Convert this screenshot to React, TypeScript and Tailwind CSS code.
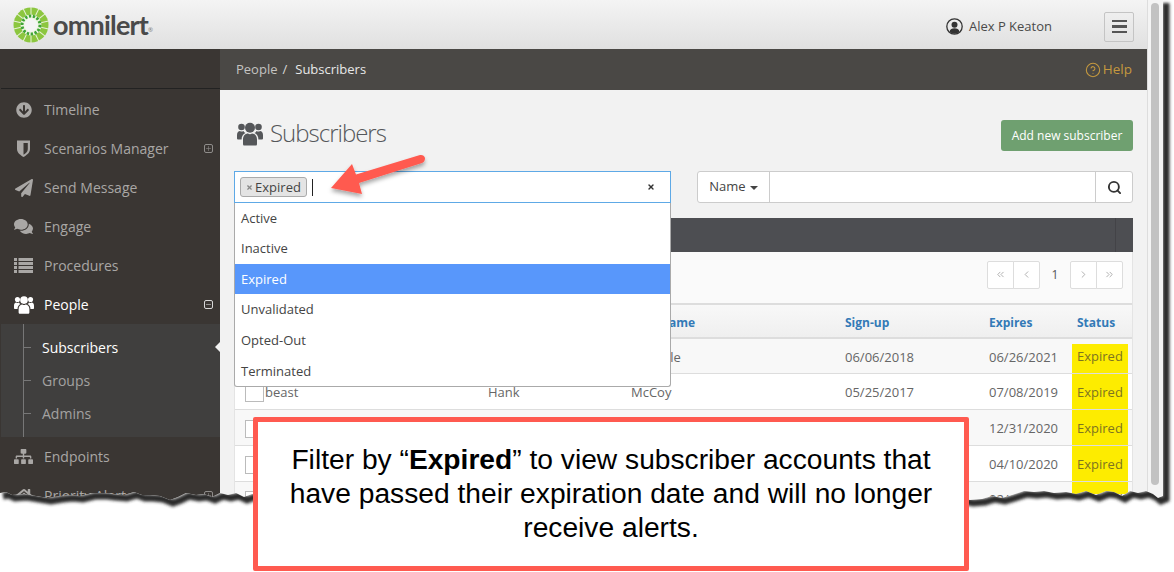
import React from "react";
import { ChevronLeft, ChevronRight, ChevronsLeft, ChevronsRight, Search, X, Plus, Minus, CircleHelp } from "lucide-react";
import { FaArrowCircleDown, FaPaperPlane, FaComments, FaSitemap, FaHome } from "react-icons/fa";

const font = "font-['Open_Sans',sans-serif]";

function Logo() {
  const segs = Array.from({ length: 14 }, (_, i) => (i * 360) / 14);
  return (
    <svg width="36" height="36" viewBox="0 0 36 36" className="shrink-0">
      <circle cx="18" cy="18" r="17.5" fill="#8cc63f" />
      {segs.map((a) => (
        <line key={a} x1="18" y1="18" x2="18" y2="0" stroke="#e8f2d8" strokeWidth="1" transform={`rotate(${a} 18 18)`} />
      ))}
      <circle cx="18" cy="18" r="10.5" fill="#eef5e2" />
      <circle cx="18" cy="18" r="9" fill="none" stroke="#3fa535" strokeWidth="3" strokeDasharray="2.4 1.6" />
      <circle cx="18" cy="18" r="6.5" fill="#f4f4f4" />
    </svg>
  );
}

function UsersIcon({ width, height }: { width: number; height: number }) {
  return (
    <svg width={width} height={height} viewBox="0 0 26 24" fill="currentColor">
      <circle cx="13" cy="6.200" r="5" />
      <circle cx="4.500" cy="5.500" r="3.300" />
      <circle cx="21.500" cy="5.500" r="3.300" />
      <path d="M7 24 Q6 24 6 22.500 V18 C6 14 8.500 12 11 12 Q13 13.500 15 12 C17.500 12 20 14 20 18 V22.500 Q20 24 19 24 Z" />
      <path d="M0 17 V13.500 C0 11 1.500 9.500 3 9.500 Q4.500 10.500 6.500 9.500 Q7 10.800 8.500 11.500 C6 12.500 4.600 15 4.600 18 H1 Q0 18 0 17 Z" />
      <path d="M26 17 V13.500 C26 11 24.500 9.500 23 9.500 Q21.500 10.500 19.500 9.500 Q19 10.800 17.500 11.500 C20 12.500 21.400 15 21.400 18 H25 Q26 18 26 17 Z" />
    </svg>
  );
}

function ShieldIcon() {
  return (
    <svg width="15" height="17" viewBox="0 0 15 17" fill="currentColor">
      <path d="M1 0.500 H14 V9 C14 13 10 15.500 7.500 17 C5 15.500 1 13 1 9 Z" />
      <path d="M7.500 3 H11.800 V9 C11.800 11.800 9.500 13.500 7.500 14.700 Z" fill="#3a3633" />
    </svg>
  );
}

function ListIcon() {
  return (
    <svg width="19" height="15" viewBox="0 0 19 15" fill="currentColor">
      {[0, 4, 8, 12].map((y) => (
        <g key={y}>
          <rect x="0" y={y} width="3" height="3" />
          <rect x="4.500" y={y} width="14.500" height="3" />
        </g>
      ))}
    </svg>
  );
}

function UserCircle() {
  return (
    <svg width="17" height="17" viewBox="0 0 17 17" className="text-[#333]">
      <circle cx="8.500" cy="8.500" r="7.700" fill="none" stroke="currentColor" strokeWidth="1.300" />
      <circle cx="8.500" cy="6.800" r="3" fill="currentColor" />
      <path d="M3.600 13.500 C4 11 6 10.200 8.500 10.200 C11 10.200 13 11 13.400 13.500 C12 15 10.500 15.700 8.500 15.700 C6.500 15.700 5 15 3.600 13.500 Z" fill="currentColor" />
    </svg>
  );
}

function NavItem({ icon, label, active, mark }: { icon: React.ReactNode; label: string; active?: boolean; mark?: "plus" | "minus" }) {
  return (
    <div className={`relative flex h-[39px] items-center pl-[12px] pr-[7px] text-[14px] ${active ? "text-white" : "text-[#a9a7a5]"}`}>
      <span className="flex w-[21px] justify-center">{icon}</span>
      <span className="ml-[10px] flex-1">{label}</span>
      {mark && (
        <span className={`flex h-[9px] w-[9px] items-center justify-center rounded-[2px] border ${active ? "border-[#d8d8d8] text-[#d8d8d8]" : "border-[#8f8d8b] text-[#8f8d8b]"}`}>
          {mark === "plus" ? <Plus size={7} strokeWidth={2} /> : <Minus size={7} strokeWidth={2} />}
        </span>
      )}
    </div>
  );
}

function SubItem({ label, active }: { label: string; active?: boolean }) {
  return (
    <div className={`relative flex h-[33px] items-center pl-[41px] text-[14px] ${active ? "font-medium text-white" : "text-[#a3a2a1]"}`}>
      <span className="absolute left-[22px] top-[16px] h-px w-[8px] bg-[#777]" />
      {label}
      {active && <span className="absolute right-0 top-[11px] h-0 w-0 border-y-[5px] border-r-[5px] border-y-transparent border-r-[#f2f2f2]" />}
    </div>
  );
}

const rows = [
  { user: "", first: "", last: "Whipple", signup: "06/06/2018", expires: "06/26/2021", h: "h-[35px] pt-[2px]", bg: "bg-[#f8f8f8]", cell: "self-end h-[29px] bg-[#fdec00] pb-[3px]" },
  { user: "beast", first: "Hank", last: "McCoy", signup: "05/25/2017", expires: "07/08/2019", h: "h-[36px]", bg: "bg-white", cell: "h-full bg-[#fdec00] pt-[2px]" },
  { user: "", first: "", last: "", signup: "", expires: "12/31/2020", h: "h-[36px]", bg: "bg-[#f8f8f8]", cell: "h-full bg-[#fdec00] pt-[2px]" },
  { user: "", first: "", last: "", signup: "", expires: "04/10/2020", h: "h-[36px]", bg: "bg-white", cell: "h-full bg-[#fdec00] pt-[2px]" },
  { user: "", first: "", last: "", signup: "", expires: "02/15/2020", h: "h-[35px]", bg: "bg-[#f8f8f8]", cell: "h-full bg-[linear-gradient(#fdec00_12px,transparent_12px)] pt-[2px]" },
];

function PageButton({ children, className }: { children: React.ReactNode; className: string }) {
  return <span className={`flex h-[28px] w-[27px] items-center justify-center border border-[#ddd] bg-white text-[#aaa] ${className}`}>{children}</span>;
}

function Table() {
  return (
    <div className="text-[13px] text-[#666]">
      <div className="flex h-[36px] items-center border-y-2 border-[#ddd] bg-gradient-to-b from-[#f8f8f8] to-[#efefef] pt-[3px] text-[12px] font-bold text-[#337ab7]">
        <span className="ml-[30px] w-[223px]">Username</span>
        <span className="w-[143px]">First Name</span>
        <span className="w-[214px]">Last Name</span>
        <span className="w-[144px]">Sign-up</span>
        <span className="w-[88px]">Expires</span>
        <span>Status</span>
      </div>
      {rows.map((r, i) => (
        <div key={i} className={`flex items-center border-b border-[#ddd] ${r.h} ${r.bg}`}>
          <span className="ml-[10px] mt-[2px] h-[18px] w-[19px] shrink-0 border border-[#bbb] bg-white" />
          <span className="ml-px w-[223px] pt-[2px]">{r.user}</span>
          <span className="w-[143px] pt-[2px]">{r.first}</span>
          <span className="w-[214px] pt-[2px]">{r.last}</span>
          <span className="w-[144px] pt-[2px]">{r.signup}</span>
          <span className="w-[83px] pt-[2px]">{r.expires}</span>
          <span className={`flex w-[56px] items-center pl-[5px] text-[#7d7420] ${r.cell}`}>Expired</span>
        </div>
      ))}
    </div>
  );
}

const tear =
  "M1163 0 L1163 496 L1158 498 L1153 494 L1146 491 L1138 493 L1130 491 L1122 496 L1114 492 L1106 491 L1096 495 L1086 491 L1076 494 L1066 492 L1054 493 L1044 491 L1034 492 L1024 491 L1012 495 L1002 498 L992 496 L982 499 L970 500 L960 498 L950 498 L935 496 L920 498 L905 496 L890 499 L870 496 L850 498 L830 496 L810 498 L790 496 L770 498 L750 496 L730 498 L710 496 L690 498 L670 496 L650 498 L630 496 L610 498 L590 496 L570 498 L550 496 L530 498 L510 496 L490 498 L470 496 L450 498 L430 496 L410 498 L390 496 L370 498 L350 496 L330 498 L310 496 L290 498 L270 496 L252 494 L244 497 L236 493 L228 495 L220 493 L212 497 L204 494 L196 495 L186 493 L178 497 L170 500 L160 496 L150 495 L142 495 L134 492 L124 495 L112 494 L104 493 L92 493 L80 496 L70 495 L60 496 L48 498 L36 496 L24 494 L12 495 L6 492 L0 493";

export default function App() {
  return (
    <div className={`relative h-[572px] w-[1174px] overflow-hidden bg-white ${font}`}>
      <div className="flex h-[572px] w-[1163px]">
        <div className="flex w-[1147px] flex-col">
          <header className="flex h-[49px] shrink-0 items-center bg-gradient-to-b from-[#f4f4f4] to-[#e0e0e0] pr-[13px]">
            <div className="ml-[13px] flex items-center">
              <Logo />
              <span className="ml-[4px] font-['Lato',sans-serif] text-[27px] font-bold leading-none tracking-[-0.8px] text-[#4a4a4a]">omnilert</span>
              <span className="mt-[12px] text-[6px] text-[#777]">®</span>
            </div>
            <div className="ml-auto flex items-center pt-[4px]">
              <UserCircle />
              <span className="ml-[6px] pt-px text-[13px] text-[#4a4a4a]">Alex P Keaton</span>
              <span className="ml-[52px] flex h-[30px] w-[30px] flex-col items-center justify-center gap-[3px] rounded-[2px] border border-[#c4c4c4]">
                <span className="h-[2.500px] w-[15px] bg-[#555]" />
                <span className="h-[2.500px] w-[15px] bg-[#555]" />
                <span className="h-[2.500px] w-[15px] bg-[#555]" />
              </span>
            </div>
          </header>
          <div className="flex min-h-0 flex-1">
            <aside className="w-[220px] shrink-0 bg-[#3a3633] pl-px">
              <div className="h-[40px] border-b border-[#222]" />
              <div className="pt-px">
                <NavItem icon={<FaArrowCircleDown size={16} />} label="Timeline" />
                <NavItem icon={<ShieldIcon />} label="Scenarios Manager" mark="plus" />
                <NavItem icon={<FaPaperPlane size={18} />} label="Send Message" />
                <NavItem icon={<FaComments size={19} />} label="Engage" />
                <NavItem icon={<ListIcon />} label="Procedures" />
                <NavItem icon={<UsersIcon width={20} height={19} />} label="People" active mark="minus" />
              </div>
              <div className="relative h-[113px] bg-[#403f3e]">
                <span className="absolute bottom-0 left-[22px] top-0 w-px bg-[#777]" />
                <div className="pt-[7px]">
                  <SubItem label="Subscribers" active />
                  <SubItem label="Groups" />
                  <SubItem label="Admins" />
                </div>
              </div>
              <NavItem icon={<FaSitemap size={19} />} label="Endpoints" />
              <NavItem icon={<FaHome size={18} />} label="Priority Alert" mark="plus" />
            </aside>
            <main className="min-w-0 flex-1 bg-[#f2f2f2]">
              <div className="flex h-[41px] items-center justify-between bg-[#4a4845] pl-[16px] pr-[15px] text-[13px]">
                <div>
                  <span className="text-[#c4c3c1]">People</span>
                  <span className="ml-[5px] text-[#d8d7d5]">/</span>
                  <span className="ml-[8px] text-[#e8e8e8]">Subscribers</span>
                </div>
                <div className="flex items-center text-[#c4983f]">
                  <CircleHelp size={16} strokeWidth={1.6} />
                  <span className="ml-[2px] text-[13.500px]">Help</span>
                </div>
              </div>
              <div className="px-[14px]">
                <div className="flex h-[81px] items-start justify-between pt-[30px]">
                  <div className="flex items-center pl-[3px] text-[#55575a]">
                    <UsersIcon width={26} height={25} />
                    <span className="ml-[7px] text-[24px] font-light leading-[26px] tracking-[-1px]">Subscribers</span>
                  </div>
                  <span className="flex h-[31px] w-[132px] items-center justify-center rounded-[3px] bg-[#6fa070] text-[12px] text-white">Add new subscriber</span>
                </div>
                <div className="flex justify-between">
                  <div className="relative flex h-[32px] w-[437px] items-center border border-[#5ea9e6] bg-white pl-[5px]">
                    <span className="flex h-[20px] w-[67px] items-center justify-center rounded-[3px] border border-[#aaa] bg-[#e4e4e4] pt-px text-[13px] text-[#444]">
                      <X size={7} strokeWidth={4} className="mr-[2px] text-[#888]" />Expired
                    </span>
                    <span className="ml-[5px] h-[17px] w-px bg-[#222]" />
                    <X size={8} strokeWidth={4} className="absolute right-[15px] top-[11px] text-[#333]" />
                    <div className="absolute left-[-1px] top-[31px] z-10 w-[437px] rounded-b-[3px] border border-t-0 border-[#aaa] bg-white text-[13px] text-[#444]">
                      <div className="flex h-[30px] items-center pl-[6px] pt-[2px]">Active</div>
                      <div className="flex h-[31px] items-center pl-[6px]">Inactive</div>
                      <div className="flex h-[30px] items-center bg-[#5897fb] pl-[6px] pt-[2px] text-white">Expired</div>
                      <div className="flex h-[31px] items-center pl-[6px]">Unvalidated</div>
                      <div className="flex h-[31px] items-center pl-[6px]">Opted-Out</div>
                      <div className="flex h-[30px] items-center pl-[6px] pt-[2px]">Terminated</div>
                    </div>
                  </div>
                  <div className="flex h-[32px] w-[436px] overflow-hidden rounded-[3px] border border-[#ccc] bg-white">
                    <span className="flex w-[72px] items-center justify-center border-r border-[#ccc] text-[13px] text-[#444]">
                      Name<span className="ml-[4px] mt-px h-0 w-0 border-x-[4px] border-t-[4px] border-x-transparent border-t-[#444]" />
                    </span>
                    <span className="flex-1" />
                    <span className="flex w-[37px] items-center justify-center border-l border-[#ccc] text-[#333]">
                      <Search size={15} strokeWidth={3} />
                    </span>
                  </div>
                </div>
                <div className="mt-[15px] flex h-[34px] justify-end bg-[#4d4e52] pr-[17px]">
                  <span className="w-px bg-[#434347]" />
                </div>
                <div className="border-x border-[#e4e4e4] bg-[#fafafa]">
                  <div className="flex h-[51px] items-center justify-end pb-[6px] pr-[9px]">
                    <PageButton className="rounded-l-[2px]"><ChevronsLeft size={11} /></PageButton>
                    <PageButton className="-ml-px rounded-r-[2px]"><ChevronLeft size={11} /></PageButton>
                    <span className="w-[30px] text-center text-[12px] text-[#555]">1</span>
                    <PageButton className="rounded-l-[2px]"><ChevronRight size={11} /></PageButton>
                    <PageButton className="-ml-px rounded-r-[2px]"><ChevronsRight size={11} /></PageButton>
                  </div>
                  <Table />
                </div>
              </div>
            </main>
          </div>
        </div>
        {/* scrollbar */}
        <div className="w-[16px] border-l border-[#ddd] bg-[#f4f4f4] pl-[3px] pt-[3px]">
          <div className="h-[482px] w-[8px] rounded-[4px] bg-[#c2c2c2]" />
        </div>
      </div>

      {/* torn paper edge */}
      <svg className="absolute left-0 top-0" width="1174" height="572" viewBox="0 0 1174 572">
        <defs>
          <clipPath id="outside">
            <path d={`${tear} L0 572 L1174 572 L1174 0 Z`} />
          </clipPath>
          <filter id="soft" x="-5%" y="-5%" width="110%" height="110%">
            <feGaussianBlur stdDeviation="1.800" />
          </filter>
          <filter id="arrowShadow" x="-20%" y="-20%" width="140%" height="150%">
            <feDropShadow dx="0" dy="3" stdDeviation="2" floodColor="#000" floodOpacity="0.35" />
          </filter>
        </defs>
        <g clipPath="url(#outside)">
          <rect width="1174" height="572" fill="#fff" />
          <path d={tear} fill="none" stroke="#2a2a2a" strokeWidth="7" filter="url(#soft)" transform="translate(3 3)" />
        </g>
        <g filter="url(#arrowShadow)">
          <path d="M331 188 L352 164 L356 174.500 L420 155 Q424 154.500 425 158 Q425 162 422 163 L359 183 L362 194 Z" fill="#ff5a50" />
        </g>
      </svg>

      {/* callout */}
      <div className="absolute left-[253px] top-[417px] flex h-[154px] w-[716px] items-center justify-center rounded-[2px] border-[5px] border-[#ff5a50] bg-white px-[20px] pb-[2px] text-center font-['Liberation_Sans',Arial,sans-serif] text-[28.200px] leading-[34px] text-black">
        <p>Filter by “<b>Expired</b>” to view subscriber accounts that have passed their expiration date and will no longer receive alerts.</p>
      </div>
    </div>
  );
}
